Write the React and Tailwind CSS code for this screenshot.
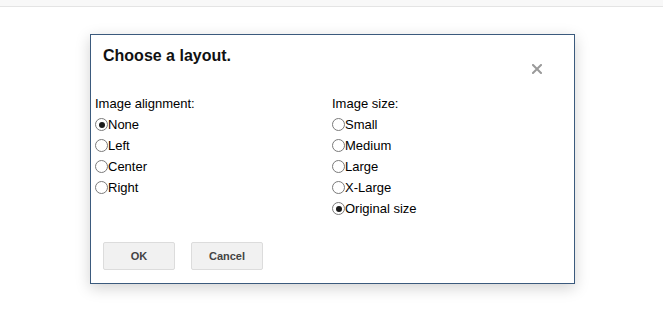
import React from "react";

function Radio({ checked, label }) {
  return (
    <div className="flex items-center h-[21px]">
      <span className="w-[13px] h-[13px] rounded-full border border-[#7a7a7a] bg-white flex items-center justify-center shrink-0">
        {checked && <span className="w-[6px] h-[6px] rounded-full bg-[#1a1a1a]" />}
      </span>
      <span>{label}</span>
    </div>
  );
}

export default function App() {
  return (
    <div className="w-[663px] h-[316px] bg-white overflow-hidden text-black" style={{ fontFamily: '"Liberation Sans", Arial, sans-serif' }}>
      <div className="h-[7px] bg-[#f8f8f8] border-b border-[#e4e4e4]" />
      <div className="ml-[90px] mt-[27px] w-[485px] h-[250px] border border-[#3b5a7d] bg-white shadow-[0_4px_14px_rgba(0,0,0,0.18)] flex flex-col">
        <div className="h-[58px] pt-[12px] pl-[12px] pr-[32px] flex items-start justify-between">
          <div className="text-[16px] leading-[18px] font-bold text-[#111]">Choose a layout.</div>
          <svg width="10" height="10" viewBox="0 0 10 10" className="mt-[17px]">
            <path d="M1 1 L9 9 M9 1 L1 9" stroke="#9a9a9a" strokeWidth="2" strokeLinecap="square" />
          </svg>
        </div>
        <div className="pl-[4px] grid grid-cols-[237px_1fr] text-[13px] leading-[21px]">
          <div className="flex flex-col">
            <div className="h-[21px]">Image alignment:</div>
            <Radio checked label="None" />
            <Radio label="Left" />
            <Radio label="Center" />
            <Radio label="Right" />
          </div>
          <div className="flex flex-col">
            <div className="h-[21px]">Image size:</div>
            <Radio label="Small" />
            <Radio label="Medium" />
            <Radio label="Large" />
            <Radio label="X-Large" />
            <Radio checked label="Original size" />
          </div>
        </div>
        <div className="pl-[12px] pt-[23px] flex gap-[16px]">
          <button className="w-[72px] h-[28px] bg-[#f1f1f1] border border-[#dcdcdc] rounded-[2px] text-[11px] font-bold text-[#444]">OK</button>
          <button className="w-[72px] h-[28px] bg-[#f1f1f1] border border-[#dcdcdc] rounded-[2px] text-[11px] font-bold text-[#444]">Cancel</button>
        </div>
      </div>
    </div>
  );
}
